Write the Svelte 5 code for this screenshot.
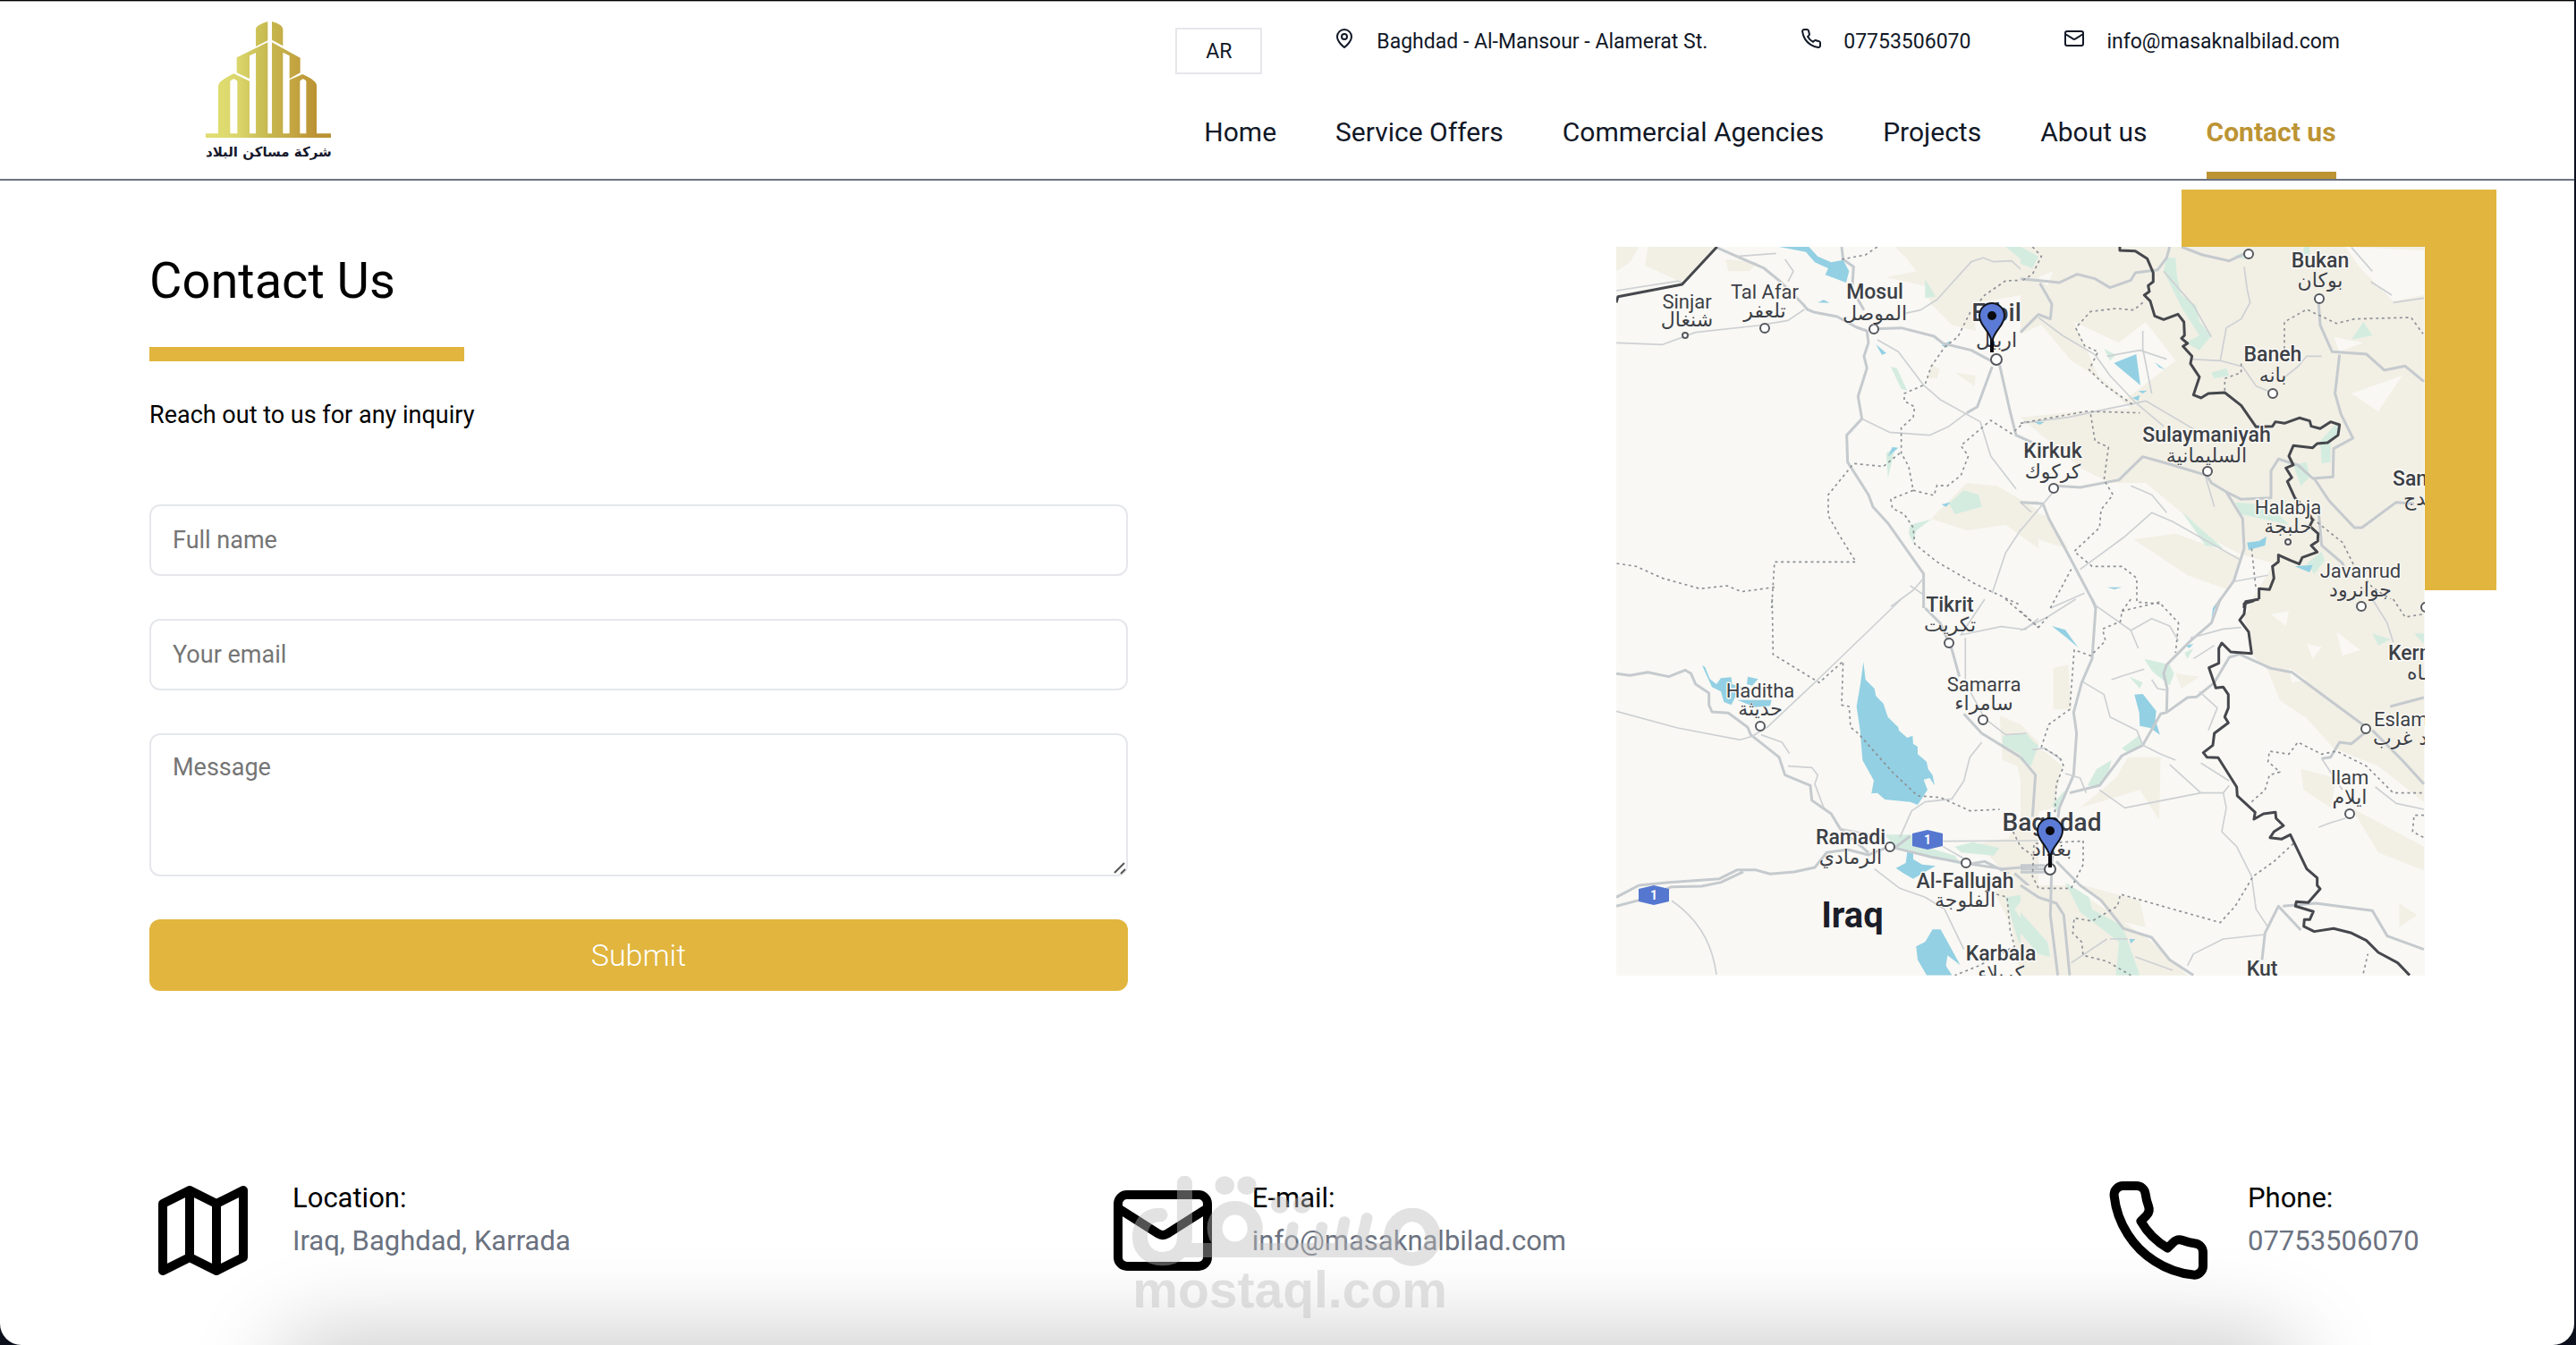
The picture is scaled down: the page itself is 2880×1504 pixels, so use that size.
<script>
    const navLinks = [
        { label: "Home", href: "#home" },
        { label: "Service Offers", href: "#services" },
        { label: "Commercial Agencies", href: "#agencies" },
        { label: "Projects", href: "#projects" },
        { label: "About us", href: "#about" },
        { label: "Contact us", href: "#contact", active: true },
    ];

    const icons = {
        pin: "M20 10c0 6-8 12-8 12s-8-6-8-12a8 8 0 0 1 16 0Z M15 10a3 3 0 1 1-6 0 3 3 0 0 1 6 0Z",
        phone: "M22 16.92v3a2 2 0 0 1-2.18 2 19.79 19.79 0 0 1-8.63-3.07 19.5 19.5 0 0 1-6-6 19.79 19.79 0 0 1-3.07-8.67A2 2 0 0 1 4.11 2h3a2 2 0 0 1 2 1.72 12.84 12.84 0 0 0 .7 2.81 2 2 0 0 1-.45 2.11L8.09 9.91a16 16 0 0 0 6 6l1.27-1.27a2 2 0 0 1 2.11-.45 12.84 12.84 0 0 0 2.81.7A2 2 0 0 1 22 16.92z",
        mail: "M4 4h16a2 2 0 0 1 2 2v12a2 2 0 0 1-2 2H4a2 2 0 0 1-2-2V6a2 2 0 0 1 2-2z M22 7l-8.97 5.7a1.94 1.94 0 0 1-2.06 0L2 7",
        map: "M3 6l6-3 6 3 6-3v15l-6 3-6-3-6 3z M9 3v15 M15 6v15",
    };

    const topContacts = [
        { icon: "pin", text: "Baghdad - Al-Mansour - Alamerat St." },
        { icon: "phone", text: "07753506070" },
        { icon: "mail", text: "info@masaknalbilad.com" },
    ];

    const details = [
        { icon: "map", title: "Location:", value: "Iraq, Baghdad, Karrada" },
        { icon: "mail", title: "E-mail:", value: "info@masaknalbilad.com" },
        { icon: "phone", title: "Phone:", value: "07753506070" },
    ];

    // city labels on the map: latin name and arabic name, each with its baseline
    const cities = [
        { x: 79, y: 69, name: "Sinjar", ar: "شنغال", ary: 89, kind: "town" },
        { x: 166, y: 58, name: "Tal Afar", ar: "تلعفر", ary: 79, kind: "town" },
        { x: 289, y: 58, name: "Mosul", ar: "الموصل", ary: 82, kind: "city" },
        { x: 425, y: 83, name: "Erbil", ar: "اربيل", ary: 112, kind: "major" },
        { x: 488, y: 236, name: "Kirkuk", ar: "كركوك", ary: 259, kind: "city" },
        { x: 660, y: 218, name: "Sulaymaniyah", ar: "السليمانية", ary: 241, kind: "city" },
        { x: 734, y: 128, name: "Baneh", ar: "بانه", ary: 151, kind: "city" },
        { x: 787, y: 23, name: "Bukan", ar: "بوكان", ary: 45, kind: "city" },
        { x: 751, y: 299, name: "Halabja", ar: "حلبجة", ary: 320, kind: "town" },
        { x: 832, y: 370, name: "Javanrud", ar: "جوانرود", ary: 391, kind: "town" },
        { x: 373, y: 408, name: "Tikrit", ar: "تكريت", ary: 430, kind: "city" },
        { x: 161, y: 504, name: "Haditha", ar: "حديثة", ary: 524, kind: "town" },
        { x: 411, y: 497, name: "Samarra", ar: "سامراء", ary: 518, kind: "town" },
        { x: 262, y: 668, name: "Ramadi", ar: "الرمادي", ary: 690, kind: "city" },
        { x: 390, y: 717, name: "Al-Fallujah", ar: "الفلوجة", ary: 738, kind: "city" },
        { x: 430, y: 798, name: "Karbala", ar: "كربلاء", ary: 820, kind: "city" },
        { x: 487, y: 653, name: "Baghdad", ar: "بغداد", ary: 681, kind: "major" },
        { x: 722, y: 815, name: "Kut", ar: "", ary: 840, kind: "city" },
        { x: 820, y: 601, name: "Ilam", ar: "ایلام", ary: 623, kind: "town" },
        { x: 868, y: 267, name: "Sanandaj", ar: "سنندج", arx: 880, ary: 289, kind: "city", start: true },
        { x: 863, y: 462, name: "Kermanshah", ar: "كرمانشاه", arx: 884, ary: 484, kind: "city", start: true },
        { x: 847, y: 536, name: "Eslamabad", ar: "اسلام آباد غرب", arx: 846, ary: 557, kind: "town", start: true },
    ];

    const dots = [
        [166, 91, 5], [288, 92, 5], [77, 99, 3], [425, 126, 6], [489, 270, 5],
        [661, 251, 5], [734, 164, 5], [786, 58, 5], [707, 8, 5], [751, 330, 3],
        [833, 402, 5], [372, 443, 5], [161, 536, 5], [410, 529, 5], [306, 671, 5],
        [391, 689, 5], [485, 696, 6], [838, 539, 5], [820, 634, 5], [905, 403, 5],
    ];

    const shields = [[348, 663], [42, 725]];
    const markers = [[420, 77], [485, 653]];

    let fullName = "";
    let email = "";
    let message = "";
</script>

<svelte:head>
    <title>Contact Us</title>
</svelte:head>

<div class="page">
    <header class="header">
        <a class="logo" href="#home" aria-label="Home page">
            <svg viewBox="0 0 420 390" class="logo-mark" aria-hidden="true">
                <defs>
                    <linearGradient id="gold" x1="40" y1="0" x2="372" y2="0" gradientUnits="userSpaceOnUse">
                        <stop offset="0" stop-color="#dfdc70" />
                        <stop offset="0.2" stop-color="#dbd66b" />
                        <stop offset="0.5" stop-color="#c6b94f" />
                        <stop offset="0.75" stop-color="#c4a743" />
                        <stop offset="1" stop-color="#bb9233" />
                    </linearGradient>
                </defs>
                <g fill="url(#gold)">
                    <path d="M168 24Q170 12 208 0V64L168 84Z" />
                    <path d="M222 0Q258 10 259 26V82L222 62Z" />
                    <path d="M104 121L208 70V380H168V105L147 115V192L104 172Z" />
                    <path d="M222 70L317 122V172L281 192V115L259 104V380H222Z" />
                    <path d="M42 380V215Q42 200 94 175L147 200V380H106V200Q94 185 82 200V380Z" />
                    <path d="M281 380V196L325 177Q372 198 372 215V380H337V200Q326 185 316 200V380Z" />
                    <path d="M0 376H420V390H0Z" />
                </g>
            </svg>
            <span class="logo-text" lang="ar" dir="rtl">شركة مساكن البلاد</span>
        </a>

        <div class="header-right">
            <div class="topbar">
                <button class="lang-button" type="button">AR</button>
                <ul class="top-contacts">
                    {#each topContacts as item}
                        <li>
                            <svg class="icon icon-small" viewBox="0 0 24 24" aria-hidden="true">
                                <path d={icons[item.icon]} />
                            </svg>
                            <span>{item.text}</span>
                        </li>
                    {/each}
                </ul>
            </div>
            <nav class="nav">
                {#each navLinks as link}
                    <a href={link.href} class:active={link.active}>{link.label}</a>
                {/each}
            </nav>
        </div>
    </header>

    <main>
        <section class="contact">
            <div class="contact-form">
                <h1>Contact Us</h1>
                <div class="title-bar"></div>
                <p class="lead">Reach out to us for any inquiry</p>

                <form on:submit|preventDefault>
                    <input type="text" aria-label="Full name" placeholder="Full name" bind:value={fullName} />
                    <input type="email" aria-label="Your email" placeholder="Your email" bind:value={email} />
                    <div class="message-box">
                        <textarea aria-label="Message" placeholder="Message" bind:value={message}></textarea>
                        <svg class="grip" viewBox="0 0 14 14" aria-hidden="true">
                            <path d="M1 12L12 1M8 13L13 8" />
                        </svg>
                    </div>
                    <button class="submit" type="submit">Submit</button>
                </form>
            </div>

            <div class="map-wrap">
                <svg class="map" viewBox="0 0 904 815" role="img" aria-label="Map of Iraq">
                    <rect width="904" height="815" fill="#f9f8f4" />

                    <!-- north west -->
                    <g transform="translate(-8 -16) scale(.3333)">
                        <g class="terrain">
                            <path d="M24 48H100L70 100 24 130ZM130 48H360L250 170 120 110ZM390 90L500 100 470 130 400 130ZM960 48H1440V290L1380 210 1220 240 1230 330 1150 310 1080 240 1060 180 930 150 1030 130 1000 90ZM1080 440L1110 460 1100 490 1070 490ZM1160 470L1230 480 1225 515ZM1080 960L1200 840 1300 850 1440 930V1060L1330 980 1200 1000Z" />
                        </g>
                        <g class="green">
                            <path d="M1330 48H1440V80L1400 105ZM1060 155L1095 215 1060 220ZM945 450L965 455 1000 530 980 525ZM930 740L960 720 935 825ZM1140 910L1190 865 1240 880 1250 920 1160 945ZM1010 980L1080 962 1030 1000 1020 1040 1005 1010Z" />
                        </g>
                        <g class="water">
                            <path d="M570 48H670L700 80 745 100 785 92 805 130 795 168 725 142 735 120 690 100 660 65ZM700 235L720 226 740 236ZM895 375L930 405 915 410ZM1115 380L1145 362 1135 385ZM1115 912L1145 905 1130 920ZM950 720L970 722 935 752Z" />
                        </g>
                        <g class="road">
                            <path d="M360 50L440 85 520 120 575 165 650 240 665 258 690 268 765 282 830 318 865 330 870 370 855 415 865 455 835 550 848 625 797 680 800 770 870 880 885 920 935 975 1055 1145 1055 1260M780 48L785 90 820 115 815 190 855 260M890 323L980 320 1090 348 1120 372 1215 395 1280 430M1285 450L1235 585 1200 605M1310 445L1345 600 1365 680 1420 705" />
                            <path d="M1440 275L1400 325" />
                        </g>
                        <g class="road thin">
                            <path d="M24 370L180 376 290 335 500 312 600 295 655 258M24 195L230 163 250 170M430 80L560 70M590 90L618 130 600 165M900 360L970 400 1055 512 1110 560 1245 635 1280 750 1365 860M848 625L940 670 1075 680 1140 650 1200 605M990 272L1045 260 1100 225 1215 98 1255 85 1290 98 1350 95 1410 150 1440 165M1440 905H1380L1418 940 1330 1075 1285 1210M1055 1160L1020 1200 945 1255M1010 1185L1055 1215" />
                        </g>
                        <g class="province">
                            <path d="M780 90L860 75 900 48M1440 100L1395 160 1330 162 1260 210 1210 270 1170 350 1125 385 1080 450 1060 510 990 540 990 565 1025 585 1020 620 980 655V740L1005 785 1020 865 945 895 950 925 990 945 1020 990 1025 1045 1100 1105 1230 1180 1380 1250M975 740L920 785 820 775 735 880V950L775 1020 828 1105H555L545 1260M555 1190L445 1205 395 1185 305 1195 180 1160 90 1120 24 1110M1020 865L1090 882 1100 848 1135 850 1180 815 1205 750 1180 715 1280 630 1350 675 1400 630 1440 635" />
                        </g>
                        <path class="border" d="M24 235L30 215 245 174 362 48" />
                    </g>

                    <!-- north east -->
                    <g transform="translate(452 -16) scale(.3333)">
                        <g class="terrain">
                            <path d="M0 48H1353V1260H760L850 1110 740 1080 640 1030 540 940 420 840 300 840 200 790 0 620 200 600 370 590 250 480 170 430 70 310 0 340ZM380 1030L520 1010 740 1090 700 1200 560 1150ZM0 930L90 950 160 1060 90 1040 0 1000Z" />
                        </g>
                        <g class="clearing">
                            <path d="M180 300L330 370 420 300 520 430 430 500 350 560 260 480ZM1090 48L1353 60V210L1250 230 1140 120ZM60 150L110 130 90 180ZM1110 540L1280 480 1200 600ZM370 850L470 900 530 1010 410 960ZM1050 350L1150 370 1070 400Z" />
                        </g>
                        <g class="green">
                            <path d="M0 48L60 80 40 120 0 105ZM490 85H520L525 150 540 210 590 245 600 300 640 345 600 395 555 370 600 345 545 260 480 130ZM280 390L320 410 300 430ZM640 470L690 455 700 480 650 490ZM950 48H970V100L950 90ZM1005 700L1060 640 1075 665 1040 700V770L1010 775ZM915 780L960 770 970 820 940 850ZM720 905L780 910 870 950 900 980 740 945ZM540 935L600 990 680 1060 620 1050ZM960 1110L1010 1070 1020 1100 985 1145ZM715 80L760 60 750 90ZM1110 360L1150 300 1180 345Z" />
                        </g>
                        <g class="water">
                            <path d="M313 438L388 408 402 512ZM375 555L400 545 395 565ZM395 532L425 530 410 540ZM760 1040L800 1035 825 1020 820 1050 765 1065ZM290 1190L340 1190 315 1197ZM45 635L80 635 65 645ZM920 1120L980 1115 970 1140ZM450 435L485 460 465 452Z" />
                        </g>
                        <g class="road">
                            <path d="M0 155L130 168 190 140 250 155 300 185 370 160 385 135 460 125 490 85 500 48M65 170L105 240 100 290 60 275 0 335M540 48L610 75 700 95 755 70M1000 240L1005 310 1045 400 1160 408 1220 462 1290 448 1353 500M1070 410L1055 540 1075 610 1115 690 1050 725 1048 820 980 825 930 780 865 760 840 800 840 890 740 895 690 870 640 840 625 815 510 780 410 752 330 830 200 855 115 850M985 825L1035 900 1120 990 1145 990 1260 905 1320 910M1000 940L1010 1050 1080 1110 1095 1150M0 905L75 910 95 960 160 1080 255 1260M690 870L745 960 750 1060 715 1170 650 1260" />
                        </g>
                        <g class="road thin">
                            <path d="M60 285L140 345 250 410 300 480 385 570 480 650M0 640L160 620 300 590 420 565 590 665M290 415L400 395 490 425M410 330V390L440 540M480 130L580 245 640 350M750 115L760 190 770 235 740 290 690 320 670 430 570 425M670 430L745 450 790 515 850 540M880 490L930 450 960 415 1010 415M1110 50L1180 130M1175 165L1245 210M1250 235L1353 220M615 800L650 920M370 850L440 880 490 940M200 1130L350 1020 440 940 510 970 740 1100M100 1260L215 1210M0 1000L110 870M720 1170L830 1150" />
                        </g>
                        <g class="province">
                            <path d="M410 235L380 260 320 255 235 265 185 320 215 380 260 400 230 460 280 510 380 580M0 640L220 600 400 605M235 610L250 700 295 720 280 830 310 880 270 930 265 990 180 1070 240 1120 340 1120 390 1160V1240L470 1245M685 530V490L740 470 740 435M885 390V300L960 258 1060 305 1120 290 1310 285 1350 340M775 1060L790 1200M980 960L1080 1040 1120 1120 1180 1190 1270 1250M40 48L70 80 40 140 0 165M100 1260L170 1130" />
                        </g>
                        <path class="border" d="M333 48V60L385 62 425 88 445 135 445 165 428 178 432 198 415 210 435 230 450 280 480 292 528 274 548 300 550 345 540 355 560 372 545 382 575 415 570 440 600 485 580 545 605 555 630 540 685 537 740 580 790 652 845 650 855 635 885 640 935 622 970 632 975 650 1005 658 1040 635 1070 645 1065 680 1030 705 995 708 980 722 915 715 900 750 915 780 890 790 910 822 895 835 920 890 960 930 980 965 970 985 998 1010 997 1035 975 1050 995 1072 945 1090 935 1112 905 1100 865 1082 865 1105 845 1120 850 1160 835 1198 800 1195 800 1230 750 1245 750 1260" />
                    </g>

                    <!-- south west -->
                    <g transform="translate(-8 394) scale(.3333)">
                        <g class="terrain">
                            <path d="M1310 390L1380 420 1440 480V1262H1380L1350 1100 1290 980 1360 960 1240 820 1340 800 1400 700 1370 560 1320 540Z" />
                        </g>
                        <g class="green">
                            <path d="M1320 460L1400 450 1440 500V590L1380 520 1320 490ZM1160 830L1220 815 1310 835 1290 860 1180 850ZM925 790L1050 790 1060 830 1160 860 1180 890 1080 865 960 830ZM1330 1000L1400 990 1360 1040 1400 1100 1440 1180V1262L1370 1140Z" />
                        </g>
                        <g class="water">
                            <path d="M312 222L322 228 338 268 360 285 375 265 410 262 412 285 445 295 425 325 410 355 385 345 375 310 345 295ZM465 260L500 268 480 290 462 285ZM430 338L545 338 540 358 490 362ZM853 210L860 270 890 300 895 325 920 350 935 395 970 430 972 440 1000 465 1018 458 1020 485 1035 495 1035 520 1065 545 1070 570 1085 590 1092 625 1075 600 1055 605 1068 640 1035 690 1010 680 925 672 900 650 880 652 888 608 850 540 842 440 830 360 843 285ZM1000 848H1020V872L1050 890 1095 895 1050 920 1020 938 985 918 962 902 995 885ZM1030 1165L1060 1150 1085 1108 1112 1108 1130 1140 1178 1228 1135 1195 1130 1230 1150 1262H1065L1035 1210Z" />
                        </g>
                        <g class="road">
                            <path d="M24 250L70 256 130 245 200 260 255 238 275 250 290 285 335 315 335 355 345 378 400 382 465 430 475 455 570 530 590 590 675 625 680 675 745 720 775 770 870 850M24 1000L100 960 200 950 370 938 430 908 490 908 540 922 620 915 690 900 730 850 800 840 870 858 940 830 1000 845 1080 865 1190 885 1320 905 1440 895M24 1030L100 1010 210 965 310 963 375 950 450 915M1060 30L1110 80 1150 170 1175 260M1190 385L1250 450 1380 530 1430 590 1420 720M1360 920L1440 990M1200 890L1260 880 1340 920M950 840L1010 795" />
                        </g>
                        <g class="road thin">
                            <path d="M980 0L700 270 530 430 480 460 440 472 230 432 24 376M510 455L580 480 605 518M600 560L680 565 700 590 690 620 720 700M770 768L920 800M1260 0L1180 120 1315 92 1395 102 1440 65M1195 130V280L1260 400 1330 455 1400 450M1250 480L1210 530 1190 610 1150 670 1060 680 1015 710 975 800M1120 812L1440 810M1120 830L1190 870M890 905L975 970 1060 1000 1125 1040 1190 1175M210 1012Q340 1100 360 1260" />
                        </g>
                        <g class="province">
                            <path d="M547 0L550 185 705 280 785 208 780 355 805 360 810 430 835 450 950 580 1035 660 1110 665 1210 710 1310 705M1355 780L1380 830 1420 860M1300 990L1335 1000 1345 1110 1360 1165 1240 1230 1160 1262M1330 0L1440 95" />
                        </g>
                    </g>

                    <!-- south east -->
                    <g transform="translate(452 394) scale(.3333)">
                        <g class="terrain">
                            <path d="M790 0H1353V680L1200 560 1050 500 960 400 870 340 830 240 780 190 750 60ZM0 490L80 510 140 560 110 700 0 730ZM110 230L160 220 170 370 110 370ZM360 530H470L465 740 400 640 200 700 320 600ZM520 250L600 260 540 300ZM940 570L1060 600 1040 700 950 640ZM1110 700L1353 830V910L1200 850ZM0 960L160 960 300 1050 440 1150 560 1262H0ZM210 960L400 1010 420 1100 330 1080ZM1270 1020L1330 1060 1270 1100Z" />
                        </g>
                        <g class="clearing">
                            <path d="M840 50L900 40 890 90ZM960 150L1010 160 980 200ZM1060 110L1140 170 1080 190ZM900 230L960 270 910 280Z" />
                        </g>
                        <g class="green">
                            <path d="M0 455L60 490 35 560 0 540ZM415 200L500 220 515 250 500 290 440 240ZM365 260L410 280 400 300ZM340 500L400 455 410 490 360 515ZM225 625L255 570 305 540 290 600 250 630ZM1180 115L1240 135 1200 155ZM1320 115H1353V150ZM550 180L580 165 560 200ZM105 690L150 640 130 720ZM150 950L230 1000 240 1040 330 1090 350 1120 400 1262H320L330 1150 200 1050ZM0 1050L90 1150 100 1200 60 1190 0 1120Z" />
                        </g>
                        <g class="water">
                            <path d="M382 320L410 318 455 375 452 405 468 455 435 432 400 425 398 380ZM150 103L193 162 155 130 105 90ZM555 155L580 150 565 165ZM365 1140L385 1140 370 1155ZM645 30L655 20 640 70Z" />
                        </g>
                        <g class="road">
                            <path d="M240 0L252 30 240 200 205 280 178 380 188 450 178 590 130 700 105 880 100 1060 125 1262M0 530L50 590 40 730M165 650L265 625 340 525 410 490 470 385 490 380 560 330 590 328 650 280 700 195 735 185 840 232 910 245 1160 430M670 0L640 80 570 140 490 220 480 250 492 300 490 380M1165 440L1110 485 1070 480 1040 530 1010 535M1240 360L1353 330M1180 440L1280 540 1353 620M120 880L200 960 270 1010 345 1105 440 1135 500 1210 580 1262M0 960L60 1000 120 1020 145 1060 165 1262M0 905H90M810 1210L820 1120 865 1030 940 1110M880 1030L990 1020 1180 1045 1230 1130 1353 1175" />
                            <path d="M0 893H80M0 916H80" />
                        </g>
                        <g class="road thin">
                            <path d="M185 0L90 60 0 105M250 20L370 105 440 65 500 90 530 140M370 105L395 165M570 130L680 100 740 95M580 200L650 155M210 278L280 320 300 395 390 440 410 490 470 520 520 540M305 270L340 258 415 235M440 270L460 300 490 305M500 555L605 650 350 700 265 640M605 650H680L700 625M605 550L700 610M600 310L660 365 630 440M680 650L690 700 675 780 725 830 775 930 790 1040 830 1100M300 1140H360M560 1230L580 1190 680 1140 820 1125M385 1200L510 1245M170 1220L290 1140M1000 765L1040 750 1090 735M1010 535L1080 640M1190 630L1260 685 1353 705M1180 0L1230 80 1250 145M40 505L80 500 140 540M150 585L200 600 220 650" />
                        </g>
                        <g class="province">
                            <path d="M370 0L340 40 335 75 275 100 285 140 235 190 180 170 165 370 95 420 70 495 130 530 145 560 120 620 115 720M340 40L465 10 530 80 520 180M0 40L60 95 90 60M775 680L820 640 835 590 870 580 830 545 835 510 900 520 930 480 1010 520 1060 510 1160 560 1250 650 1353 650M915 820L850 880 780 930 720 1030 670 1085 335 990 325 1030 240 1080 180 1070 175 1120 205 1150 210 1195 290 1215 370 1262M210 810V890L170 970H60L40 930 45 820 200 812M1353 725H1320L1315 780 1353 800M1250 0L1290 60 1353 50M1150 1255L1165 1190" />
                        </g>
                        <path class="border" d="M800 0L755 8 750 50 735 70 765 110 775 182 705 177 675 147 665 165 665 215 632 230 655 298 680 295 697 320 697 365 685 395 697 415 650 450 645 490 613 515 625 530 663 532 725 630 727 660 787 715 783 738 815 720 855 715 857 735 882 760 850 780 837 800 875 805 905 790 960 905 995 935 995 960 1005 972 965 1018 925 1015 922 1030 982 1048 970 1075 952 1075 950 1098 985 1115 1050 1105 1110 1120 1160 1145 1200 1185 1265 1220 1305 1262" />
                    </g>

                    {#each dots as [x, y, r]}
                        <circle class="dot" cx={x} cy={y} {r} />
                    {/each}

                    {#each cities as city}
                        <text class="label {city.kind}" class:start={city.start} x={city.x} y={city.y}>{city.name}</text>
                        {#if city.ar}
                            <text class="label arabic" class:start={city.start} x={city.arx ?? city.x} y={city.ary}>{city.ar}</text>
                        {/if}
                    {/each}
                    <text class="label country" x="264" y="761">Iraq</text>

                    {#each shields as [x, y]}
                        <g transform="translate({x} {y})">
                            <path d="M-17-7L0-11 17-7V7L0 11-17 7Z" fill="#5577cf" />
                            <text class="shield-text" y="5">1</text>
                        </g>
                    {/each}

                    {#each markers as [x, y]}
                        <g class="marker" transform="translate({x} {y})">
                            <path class="stem" d="M0 22V41" />
                            <path class="drop" d="M0 30C-2 16-14 12-14 0A14 14 0 0 1 14 0C14 12 2 16 0 30Z" />
                            <circle r="5" />
                        </g>
                    {/each}
                </svg>
            </div>
        </section>

        <section class="details">
            {#each details as item}
                <div class="detail">
                    <svg class="icon icon-large" viewBox="0 0 24 24" aria-hidden="true">
                        <path d={icons[item.icon]} />
                    </svg>
                    <div>
                        <h2>{item.title}</h2>
                        <p>{item.value}</p>
                    </div>
                </div>
            {/each}
        </section>
    </main>

    <div class="bottom-shade"></div>

    <div class="watermark">
        <svg viewBox="0 0 930 305" preserveAspectRatio="none" aria-hidden="true">
            <g fill="none" stroke="#bebebe" stroke-width="46" stroke-linecap="round">
                <path d="M84 130C30 130 23 180 23 205C23 250 55 277 90 277C135 277 158 245 158 205V22" />
                <ellipse cx="310" cy="175" rx="61" ry="68" />
                <ellipse cx="846" cy="204" rx="63" ry="74" />
                <path d="M485 170L475 235M573 170L563 235M641 152L626 235M709 140L689 235" stroke-width="34" />
            </g>
            <g fill="#bebebe">
                <path d="M175 224H800V272H140Z" />
                <ellipse cx="279" cy="32" rx="29" ry="31" />
                <ellipse cx="346" cy="32" rx="29" ry="31" />
                <ellipse cx="446" cy="96" rx="27" ry="29" />
                <ellipse cx="513" cy="96" rx="27" ry="29" />
            </g>
        </svg>
        <span>mostaql.com</span>
    </div>
</div>

<style>
    :global(body) {
        margin: 0;
        background: #0c0f1c;
    }

    .page {
        position: relative;
        min-height: 100vh;
        margin-right: 2px;
        box-sizing: border-box;
        border-top: 1px solid #000;
        border-radius: 0 0 24px 24px;
        overflow: hidden;
        background: #fff;
        color: #000;
        font-family: Roboto, "Noto Sans", "DejaVu Sans", sans-serif;
    }

    h1,
    h2,
    p,
    ul {
        margin: 0;
        padding: 0;
        font-weight: 400;
    }

    .icon {
        flex-shrink: 0;
        fill: none;
        stroke: currentColor;
        stroke-width: 2;
        stroke-linecap: round;
        stroke-linejoin: round;
    }

    .icon-small {
        width: 24px;
        height: 24px;
    }

    .icon-large {
        width: 120px;
        height: 120px;
    }

    /* header */
    .header {
        display: flex;
        justify-content: space-between;
        padding: 0 262px 0 230px;
        border-top: 1px solid #aaa;
        border-bottom: 2px solid #6b7280;
        color: #111827;
    }

    .logo {
        display: flex;
        flex-direction: column;
        align-items: center;
        gap: 4px;
        padding-top: 22px;
        color: #15172b;
        text-decoration: none;
    }

    .logo-mark {
        width: 140px;
        height: 130px;
    }

    .logo-text {
        font-family: "DejaVu Sans", sans-serif;
        font-size: 15px;
        font-weight: 700;
        line-height: 24px;
        white-space: nowrap;
    }

    .header-right {
        padding-top: 29px;
    }

    .topbar {
        display: flex;
        align-items: flex-start;
        gap: 80px;
        margin-bottom: 21px;
    }

    .lang-button {
        width: 97px;
        height: 52px;
        padding: 0;
        border: 2px solid #e5e7eb;
        background: #fff;
        color: #111827;
        font-family: inherit;
        font-size: 23px;
        cursor: pointer;
    }

    .top-contacts {
        display: flex;
        gap: 104px;
        list-style: none;
        font-size: 23px;
        line-height: 32px;
        white-space: nowrap;
    }

    .top-contacts li {
        display: flex;
        gap: 24px;
    }

    .nav {
        display: flex;
        gap: 66px;
        padding-left: 32px;
        white-space: nowrap;
    }

    .nav a {
        padding: 24px 0;
        border-bottom: 8px solid transparent;
        color: #111827;
        font-size: 30px;
        line-height: 40px;
        text-decoration: none;
    }

    .nav a.active {
        border-color: #bc9434;
        color: #bc9434;
        font-weight: 700;
    }

    /* contact */
    .contact {
        display: flex;
        justify-content: space-between;
        align-items: flex-start;
        padding: 74px 167px 0;
    }

    .contact-form {
        width: 43%;
    }

    h1 {
        font-size: 56px;
        line-height: 76px;
    }

    .title-bar {
        width: 352px;
        height: 16px;
        margin: 36px 0 40px;
        background: #e1b53e;
    }

    .lead {
        font-size: 27px;
        line-height: 40px;
    }

    form {
        display: flex;
        flex-direction: column;
        gap: 48px;
        margin-top: 80px;
    }

    input,
    textarea {
        display: block;
        width: 100%;
        height: 80px;
        box-sizing: border-box;
        padding: 16px 24px;
        border: 2px solid #e5e7eb;
        border-radius: 12px;
        background: #fff;
        color: #000;
        font-family: inherit;
        font-size: 27px;
        line-height: 40px;
    }

    input::placeholder,
    textarea::placeholder {
        color: #757575;
        opacity: 1;
    }

    .message-box {
        position: relative;
    }

    textarea {
        height: 160px;
        resize: none;
    }

    .grip {
        position: absolute;
        right: 2px;
        bottom: 2px;
        width: 14px;
        height: 14px;
        stroke: #555;
        stroke-width: 2;
    }

    .submit {
        height: 80px;
        border: none;
        border-radius: 12px;
        background: #e1b53e;
        color: #fff;
        font-family: inherit;
        font-size: 34px;
        font-weight: 300;
        cursor: pointer;
    }

    /* map */
    .map-wrap {
        position: relative;
        width: 904px;
    }

    .map-wrap::before {
        content: "";
        position: absolute;
        top: -64px;
        right: -80px;
        width: 352px;
        height: 448px;
        background: #e1b53e;
    }

    .map {
        position: relative;
        display: block;
        width: 100%;
    }

    .terrain {
        fill: #f2efe5;
    }

    .clearing {
        fill: #f9f8f4;
    }

    .green {
        fill: #d4ece0;
    }

    .water {
        fill: #93d0e3;
    }

    .road,
    .province,
    .border {
        fill: none;
        stroke-linejoin: round;
    }

    .road {
        stroke: #c5cace;
        stroke-width: 9;
    }

    .road.thin {
        stroke: #cdd0d3;
        stroke-width: 5;
    }

    .province {
        stroke: #8d9196;
        stroke-width: 5;
        stroke-dasharray: 9 11;
    }

    .border {
        stroke: #45474c;
        stroke-width: 9;
    }

    .dot {
        fill: #fff;
        stroke: #55585e;
        stroke-width: 2;
    }

    .label {
        fill: #3c4046;
        stroke: #fbfaf6;
        stroke-width: 3;
        stroke-linejoin: round;
        paint-order: stroke;
        text-anchor: middle;
        font-size: 22px;
    }

    .label.start {
        text-anchor: start;
    }

    .label.city {
        font-size: 23px;
        font-weight: 500;
    }

    .label.major {
        font-size: 28px;
        font-weight: 500;
    }

    .label.country {
        fill: #1b1e29;
        font-size: 40px;
        font-weight: 700;
    }

    .label.arabic {
        font-family: "DejaVu Sans", sans-serif;
        font-size: 22px;
        stroke-width: 1;
    }

    .shield-text {
        fill: #fff;
        font-size: 14px;
        font-weight: 700;
        text-anchor: middle;
    }

    .marker .stem {
        stroke: #0a0a0f;
        stroke-width: 4;
    }

    .marker .drop {
        fill: #5b7bd6;
        stroke: #10131c;
        stroke-width: 2;
    }

    .marker circle {
        fill: #0a0a0f;
    }

    /* details */
    .details {
        display: flex;
        justify-content: space-between;
        padding: 208px 167px 68px;
    }

    .detail {
        display: flex;
        gap: 40px;
        min-width: 358px;
        font-size: 31px;
        line-height: 48px;
    }

    .detail h2 {
        font-size: 31px;
    }

    .detail p {
        color: #6b7280;
    }

    .bottom-shade {
        position: absolute;
        top: 100%;
        left: 11%;
        right: 11%;
        height: 80px;
        border-radius: 40px;
        box-shadow: 0 0 100px 10px rgba(0, 0, 0, 0.22);
    }

    .watermark {
        position: absolute;
        left: 44%;
        bottom: 37px;
        width: 344px;
        opacity: 0.43;
        color: #bebebe;
        font-family: "Liberation Sans", sans-serif;
        font-size: 57px;
        font-weight: 700;
        line-height: 50px;
        pointer-events: none;
    }

    .watermark svg {
        display: block;
        width: 100%;
        height: 102px;
    }

    .watermark span {
        display: block;
    }
</style>
